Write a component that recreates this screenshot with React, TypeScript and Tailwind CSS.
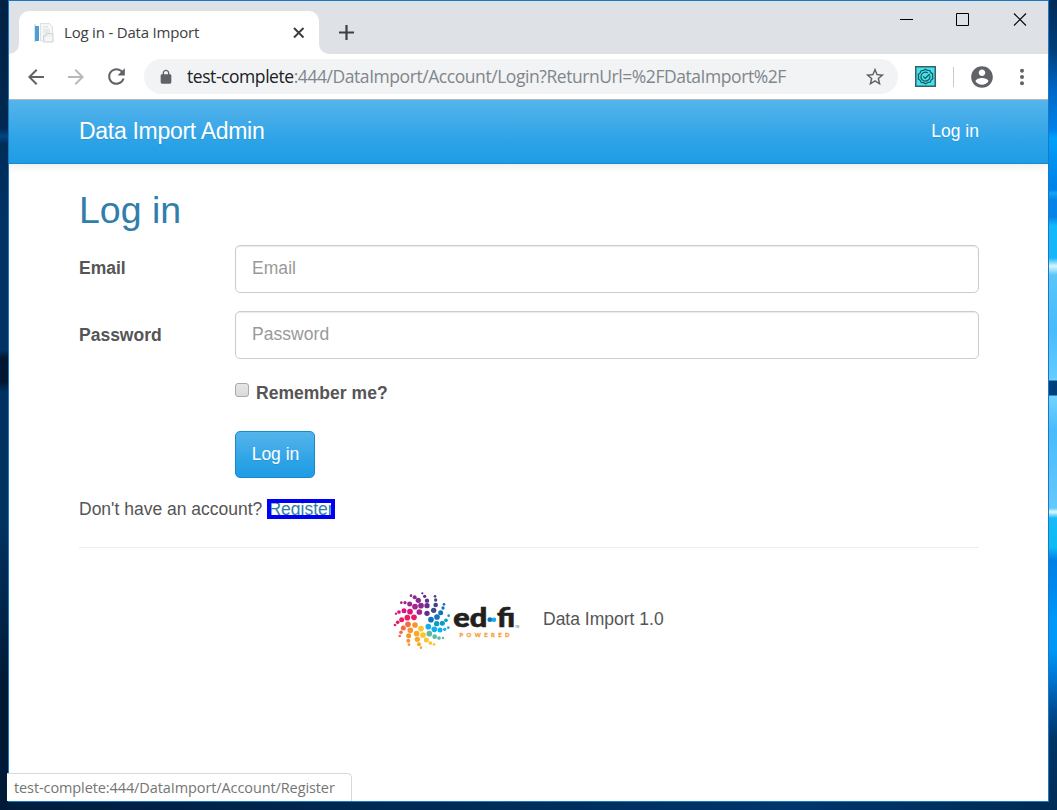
import { CSSProperties } from 'react'

type Dot = [number, number, number]
const arms: { color: string; dots: Dot[] }[] = [
  { color: '#652d90', dots: [[117, 85, 8], [117, 62, 8], [117, 47, 6.5], [110, 34, 5], [103, 25, 3.5]] },
  { color: '#414883', dots: [[137, 76, 8], [143, 60, 7], [143, 45, 5], [141, 34, 4]] },
  { color: '#1173be', dots: [[129, 104, 8.5], [147, 96, 8.5], [158, 83, 7.5], [165, 69, 5], [168, 58, 4]] },
  { color: '#0a9cc4', dots: [[146, 116, 8], [163, 115, 7.5], [174, 106, 5.5], [182, 92, 4]] },
  { color: '#12b0ea', dots: [[121, 125, 8.5], [139, 133, 8.5], [156, 135, 7.5], [170, 133, 5], [181, 128, 4]] },
  { color: '#5cb9a7', dots: [[124, 146, 8.5], [140, 155, 7], [153, 159, 5.5], [165, 159, 3.5]] },
  { color: '#fcc52e', dots: [[99, 131, 8.5], [105, 150, 8.5], [115, 165, 7.5], [127, 174, 5.5], [138, 178, 4]] },
  { color: '#f8a928', dots: [[86, 146, 8.5], [88, 163, 8], [93, 178, 6], [99, 188, 4]] },
  { color: '#f7952b', dots: [[81, 120, 8.5], [67, 136, 8.5], [62, 152, 7.5], [61, 167, 6], [63, 179, 4]] },
  { color: '#f26d43', dots: [[60, 118, 8.5], [46, 129, 7.5], [39, 142, 5.5], [35, 153, 4]] },
  { color: '#ea1a68', dots: [[78, 97, 8.5], [58, 98, 8.5], [41, 104, 7.5], [29, 112, 5.5], [21, 120, 4]] },
  { color: '#d9157d', dots: [[66, 80, 8.5], [48, 77, 7.5], [33, 81, 5.5], [24, 86, 3.5]] },
  { color: '#a5258f', dots: [[94, 81, 8.5], [81, 65, 8.5], [65, 57, 7.5], [51, 53, 5], [40, 53, 4]] },
  { color: '#8b2990', dots: [[99, 62, 8.5], [91, 46, 8], [80, 37, 6], [69, 32, 4]] },
]

function EdFiLogo() {
  return (
    <svg width="132" height="70" viewBox="0 0 132 70" className="shrink-0">
      <g transform="scale(.33333)">
        {arms.map((arm) =>
          arm.dots.map(([x, y, r]) => <circle key={`${arm.color}-${x}-${y}`} cx={x} cy={y} r={r} fill={arm.color} />),
        )}
      </g>
      <g fill="#231f20" stroke="#231f20" strokeWidth=".7" fontFamily="Lato, sans-serif" fontWeight="900" fontSize="26">
        <text x="65.200" y="41.700" textLength="34" lengthAdjust="spacingAndGlyphs">ed</text>
        <text x="109" y="41.700" textLength="18" lengthAdjust="spacingAndGlyphs">fi</text>
      </g>
      <path d="M102 34.700h4" stroke="#1591d5" strokeWidth="3" />
      <circle cx="101.800" cy="34.700" r="2.400" fill="#1173be" />
      <circle cx="106" cy="34.700" r="2.300" fill="#12b0ea" />
      <text x="71.500" y="52" fill="#f7a038" stroke="#f7a038" strokeWidth=".3" fontFamily="Lato, sans-serif" fontWeight="900" fontSize="5.800" textLength="50">POWERED</text>
      <text x="127" y="42.500" fill="#555" fontFamily="Liberation Sans, sans-serif" fontSize="3">TM</text>
    </svg>
  )
}

function Favicon() {
  return (
    <svg width="20" height="20" viewBox="0 0 20 20">
      <path d="M0 1h2v18H0z" fill="#d5e6f2" />
      <path d="M1 3h4v15H1z" fill="#4c9fd3" />
      <path d="M6.500 .5h9l3 3V18h-12z" fill="#f4f6f7" stroke="#dce1e4" />
      <path d="M9 4h5M9 7h7M9 9h7M9 12h3" stroke="#d8dde0" />
      <path d="M12 10.500h7v8.500H9.500v-6h2.500z" fill="#edf0f1" stroke="#ced4d7" />
      <path d="M11 15h7M11 17h7" stroke="#fff" />
    </svg>
  )
}

function TabBar() {
  return (
    <div className="flex h-[53px] shrink-0 bg-[#dee1e6]">
      <div className="flex w-[10px] items-end bg-white">
        <div className="h-full w-full rounded-br-[10px] bg-[#dee1e6]" />
      </div>
      <div className="w-[300px] bg-[#dee1e6] pt-[10px]">
        <div className="flex h-[43px] items-center rounded-t-[10px] bg-white pl-[15px]">
          <Favicon />
          <span className="ml-[10px] w-[226px] text-[15px] tracking-[-0.2px] text-[#3c4043]">Log in - Data Import</span>
          <svg width="18" height="18" viewBox="0 0 18 18"><path d="M4 4l9.500 9.500M13.500 4L4 13.500" stroke="#3c4043" strokeWidth="2" /></svg>
        </div>
      </div>
      <div className="flex flex-1 bg-white">
        <div className="flex flex-1 rounded-bl-[10px] bg-[#dee1e6] pl-[18px] pt-[22px]">
          <svg width="18" height="18" viewBox="0 0 18 18"><path d="M9.500 2v15M2 9.500h15" stroke="#3c4043" strokeWidth="2.200" /></svg>
        </div>
      </div>
      <div className="flex gap-[43px] pr-[21px] pt-[11px]">
        <svg width="14" height="15" viewBox="0 0 14 15"><path d="M1 7.500H14" stroke="#000" /></svg>
        <svg width="14" height="15" viewBox="0 0 14 15"><path d="M.5 1.500h12v12H.5z" fill="none" stroke="#000" /></svg>
        <svg width="14" height="15" viewBox="0 0 14 15"><path d="M1 1.500l12 12M13 1.500l-12 12" stroke="#000" strokeWidth="1.100" /></svg>
      </div>
    </div>
  )
}

function Toolbar() {
  return (
    <div className="flex h-[46px] shrink-0 items-center border-b border-[#b5b8bb] bg-white pl-[15px] pr-[16px]">
      <svg viewBox="0 0 24 24" className="h-[24px] w-[24px] shrink-0 fill-[#5f6368]"><path d="M20 11H7.830l5.590-5.590L12 4l-8 8 8 8 1.410-1.410L7.830 13H20v-2z" /></svg>
      <svg viewBox="0 0 24 24" className="ml-[16px] h-[24px] w-[24px] shrink-0 fill-[#b7babd]"><path d="M12 4l-1.410 1.410L16.170 11H4v2h12.170l-5.580 5.590L12 20l8-8z" /></svg>
      <svg viewBox="0 0 24 24" className="ml-[16px] h-[25px] w-[25px] shrink-0 fill-[#5f6368]"><path d="M17.650 6.350C16.200 4.900 14.210 4 12 4c-4.420 0-7.990 3.580-7.990 8s3.570 8 7.990 8c3.730 0 6.840-2.550 7.730-6h-2.080c-.82 2.330-3.040 4-5.650 4-3.310 0-6-2.690-6-6s2.690-6 6-6c1.660 0 3.140.69 4.220 1.780L13 11h7V4l-2.350 2.350z" /></svg>
      <div className="ml-[15px] flex h-[35px] w-[754px] shrink-0 items-center rounded-full bg-[#f1f3f4] pl-[14px] pr-[12px]">
        <svg viewBox="0 0 24 24" className="h-[16px] w-[16px] shrink-0 fill-[#5f6368]"><path d="M18 8h-1V6c0-2.760-2.240-5-5-5S7 3.240 7 6v2H6c-1.100 0-2 .9-2 2v10c0 1.100.9 2 2 2h12c1.100 0 2-.9 2-2V10c0-1.100-.9-2-2-2zM9 6c0-1.660 1.340-3 3-3s3 1.340 3 3v2H9V6z" /></svg>
        <span className="ml-[13px] whitespace-nowrap text-[17.5px] tracking-[-0.44px] text-[#80868b]"><span className="text-[#202124]">test-complete</span>:444/DataImport/Account/Login?ReturnUrl=%2FDataImport%2F</span>
        <svg viewBox="0 0 24 24" className="ml-auto h-[22px] w-[22px] shrink-0 fill-[#5f6368]"><path d="M22 9.240l-7.190-.62L12 2 9.190 8.630 2 9.240l5.460 4.730L5.820 21 12 17.270 18.180 21l-1.630-7.030L22 9.240zM12 15.400l-3.760 2.270 1-4.280-3.320-2.880 4.380-.38L12 6.100l1.710 4.040 4.380.38-3.320 2.880 1 4.280L12 15.400z" /></svg>
      </div>
      <svg width="21" height="21" viewBox="0 0 21 21" className="ml-[17px] shrink-0">
        <path d="M.75.750h19.500v19.500H.75z" fill="#43e3eb" stroke="#36606c" strokeWidth="1.500" />
        <path d="M10.500 3.200l2 1.200 2.300.1 1 2.100 1.900 1.300-.2 2.400.4 2.200-1.800 1.600-.9 2.100-2.300.3-2.200 1.200-2.100-1.100-2.400-.2-1-2.100-1.900-1.400.3-2.300-.3-2.300 1.900-1.400.9-2.200 2.400-.3z" fill="none" stroke="#1d555f" strokeWidth="1.200" />
        <path d="M14.800 9.500a4.500 4.500 0 1 1-2-2.700M8.200 10.300l2 2 4.500-4.300" fill="none" stroke="#1d555f" strokeWidth="1.200" />
      </svg>
      <div className="ml-[17px] h-[20px] w-px shrink-0 bg-[#c8cacd]" />
      <svg viewBox="0 0 24 24" className="ml-[15px] h-[26px] w-[26px] shrink-0 fill-[#5f6368]"><path d="M12 2C6.480 2 2 6.480 2 12s4.480 10 10 10 10-4.480 10-10S17.520 2 12 2zm0 3c1.660 0 3 1.340 3 3s-1.340 3-3 3-3-1.340-3-3 1.340-3 3-3zm0 14.200c-2.500 0-4.710-1.280-6-3.220.03-1.990 4-3.080 6-3.080 1.990 0 5.970 1.090 6 3.080-1.290 1.940-3.500 3.220-6 3.220z" /></svg>
      <svg viewBox="0 0 24 24" className="ml-[15px] h-[24px] w-[24px] shrink-0 fill-[#5f6368]"><circle cx="12" cy="5.700" r="2" /><circle cx="12" cy="12" r="2" /><circle cx="12" cy="18.300" r="2" /></svg>
    </div>
  )
}

const field = 'block h-[48px] w-[744px] shrink-0 rounded-[5px] border border-[#ccc] bg-white px-[16px] pb-[2px] text-[17.5px] tracking-[0.05px] shadow-[inset_0_1px_1px_rgba(0,0,0,0.08)] outline-none placeholder:text-[#999]'

function LoginPage() {
  return (
    <main className="flex flex-1 flex-col bg-white pl-[70px] pr-[69px] font-['Liberation_Sans',Arial,sans-serif] text-[17.5px] leading-[25px] text-[#555]">
      <h1 className="mt-[25px] h-[56px] text-[37.5px] leading-[42px] text-[#317eac]">Log in</h1>
      <form className="flex flex-col">
        <div className="flex h-[66px]">
          <label htmlFor="email" className="w-[156px] pt-[11px] font-bold">Email</label>
          <input id="email" placeholder="Email" className={field} />
        </div>
        <div className="flex h-[66px]">
          <label htmlFor="password" className="w-[156px] pt-[12px] font-bold">Password</label>
          <input id="password" placeholder="Password" className={`${field} pt-px`} />
        </div>
        <div className="flex h-[54px] pl-[156px] pt-[3px]">
          <span className="mt-[3px] h-[14px] w-[14px] rounded-[3px] border border-[#aaa] bg-linear-to-b from-[#e6e6e6] to-[#dadada]" />
          <span className="ml-[7px] pt-px font-bold tracking-[0.03px]">Remember me?</span>
        </div>
        <button type="button" className="ml-[156px] h-[47px] w-[80px] rounded-[5px] border border-[#178acc] bg-linear-to-b from-[#54b4eb] via-[#2fa4e7] via-60% to-[#1d9ce5] pl-px text-white [text-shadow:0_1px_0_rgba(0,0,0,0.1)]">Log in</button>
      </form>
      <div className="mt-[18px] flex h-[52px]">
        <span className="w-[188px] whitespace-nowrap pt-px">Don't have an account?</span>
        <a className="mt-[3px] flex h-[20px] w-[68px] items-center justify-center overflow-hidden border-4 border-[#0000f5] text-[#317eac] underline">Register</a>
      </div>
      <hr className="mt-[-1px] border-[#eee]" />
      <footer className="mt-[37px] flex h-[70px] items-center pl-[309px]">
        <EdFiLogo />
        <span className="ml-[23px] pb-[2px]">Data Import 1.0</span>
      </footer>
    </main>
  )
}

const rightWall: CSSProperties = {
  background:
    'linear-gradient(180deg,#022a56 0,#003e7b 50px,#0067c8 90px,#0082ea 130px,#00a0fc 138px,#0083ea 185px,#0084ec 190px,#16a4f4 193px,#0784e8 200px,#0784e8 217px,#14b9fb 226px,#16b6f8 258px,#d8f7ff 266px,#5ac5f9 275px,#48bbfb 330px,#63ccff 378px,#75d6ff 380px,#003f7d 381px,#003f7d 395px,#72d3ff 396px,#48bbfb 430px,#64c8fb 508px,#e0faff 512px,#17baf8 518px,#0dbbf5 547px,#0080e6 560px,#0087ee 585px,#0098fa 620px,#0097f7 650px,#007ad7 675px,#004d94 710px,#003565 740px,#022c55 810px)',
}

export default function App() {
  return (
    <div className="flex h-[810px] w-[1057px] overflow-hidden bg-linear-to-r from-[#001d3d] via-[#00366b] via-75% to-[#002b55] font-['Open_Sans','Noto_Sans',sans-serif]">
      <div className="w-[8px] shrink-0 bg-[linear-gradient(180deg,#002244_0,#002850_128px,#004680_136px,#002c57_144px,#003265_230px,#003263_350px,#001733_358px,#001733_382px,#003160_392px,#003260_520px,#002347_620px,#001934_690px,#001a38_810px)]" />
      <div className="relative flex h-[802px] w-[1041px] shrink-0 flex-col border border-[#1979c4] bg-white">
        <TabBar />
        <Toolbar />
        <nav className="relative z-10 flex h-[64px] shrink-0 items-center justify-between border-b border-[#178acc] bg-linear-to-b from-[#54b4eb] via-[#2fa4e7] via-60% to-[#1d9ce5] pl-[70px] pr-[69px] font-['Liberation_Sans',Arial,sans-serif] text-white [clip-path:inset(0_0_-20px_0)] shadow-[0_1px_10px_rgba(0,0,0,0.1)] [text-shadow:0_1px_0_rgba(0,0,0,0.1)]">
          <span className="text-[23px] tracking-[-0.3px]">Data Import Admin</span>
          <span className="text-[17.5px]">Log in</span>
        </nav>
        <LoginPage />
        <div className="absolute bottom-0 left-[-2px] flex h-[28px] w-[345px] items-center rounded-tr-[5px] border-r border-t border-[#d8d8d8] bg-white pl-[7px] text-[14.5px] tracking-[-0.1px] text-[#757575]">
          <span className="whitespace-nowrap">test-complete:444/DataImport/Account/Register</span>
        </div>
      </div>
      <div className="w-[8px] shrink-0" style={rightWall} />
    </div>
  )
}
